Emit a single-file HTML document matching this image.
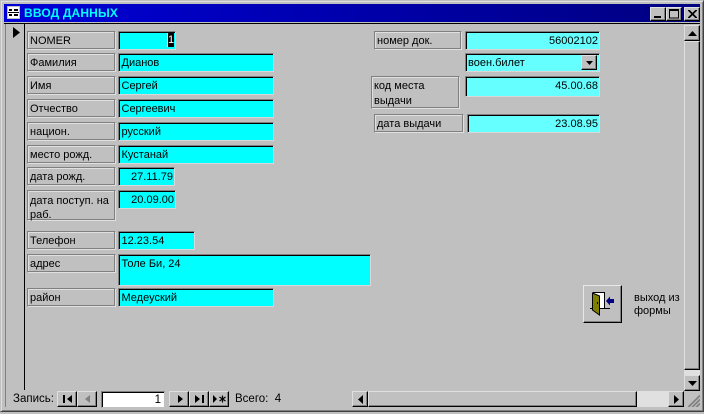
<!DOCTYPE html>
<html><head><meta charset="utf-8">
<style>
html,body{margin:0;padding:0;width:704px;height:414px;overflow:hidden;background:#c0c0c0}
body{position:relative;font-family:"Liberation Sans",sans-serif;font-size:11px;color:#000}
div{position:absolute;box-sizing:border-box}
svg{position:absolute;display:block}
.l{border:1px solid;border-color:#808080 #e0e0e0 #e0e0e0 #808080;box-shadow:inset -1px -1px 0 #808080,inset 1px 1px 0 #e0e0e0;padding:3px 0 0 2px;line-height:13px;background:#c0c0c0;white-space:normal}
.f{background:#0ff;border:1px solid;border-color:#808080 #d8d8d8 #d8d8d8 #808080;box-shadow:inset 1px 1px 0 #000;padding:2px 0 0 2.5px;line-height:14px;white-space:nowrap;font-size:11px}
.g{background:#66ffff}
.r{text-align:right;padding:2px 1px 0 0}
.b{background:#c0c0c0;border:1px solid;border-color:#dfdfdf #000 #000 #dfdfdf;box-shadow:inset -1px -1px 0 #808080}
</style></head><body>
<div style="left:0;top:0;width:704px;height:412px;border:1px solid;border-color:#c0c0c0 #404040 #404040 #c0c0c0;box-shadow:inset 1px 1px 0 #dfdfdf,inset -1px -1px 0 #808080"></div>

<!-- title bar -->
<div style="left:4px;top:4px;width:696px;height:18px;background:linear-gradient(90deg,#0000d8,#000080)"></div>
<svg style="left:7px;top:6px" width="13" height="13" viewBox="0 0 13 13"><rect x="0" y="0" width="13" height="13" fill="#fff"/><rect x="0.5" y="0.5" width="12" height="12" fill="none" stroke="#c0c0c0"/><path d="M2 3h3v2H2zM7 3h4v2H7zM2 8h3v2H2zM7 8h4v2H7z" fill="#000"/><path d="M1 6.5h11" stroke="#000"/></svg>
<div style="left:24px;top:5px;height:16px;line-height:16px;color:#0ff;font-weight:bold;font-size:12px;letter-spacing:.15px;white-space:nowrap">ВВОД ДАННЫХ</div>
<div class="b" style="left:650px;top:7px;width:16px;height:14px"><svg style="left:3px;top:8px" width="8" height="2"><rect width="7" height="2" fill="#000"/></svg></div>
<div class="b" style="left:666px;top:7px;width:16px;height:14px"><svg style="left:2px;top:1px" width="10" height="10"><rect x=".5" y="1" width="9" height="8" fill="none" stroke="#000"/><rect y="0" width="10" height="2" fill="#000"/></svg></div>
<div class="b" style="left:684px;top:7px;width:16px;height:14px"><svg style="left:3px;top:2px" width="9" height="8"><path d="M0 0L8 8M1 0L9 8M8 0L0 8M9 0L1 8" stroke="#000" stroke-width="1"/></svg></div>

<!-- form frame -->
<div style="left:4px;top:23px;width:696px;height:1px;background:#000"></div>
<div style="left:5px;top:24px;width:1px;height:366px;background:#808080"></div>
<div style="left:24px;top:24px;width:1px;height:366px;background:#000"></div>
<svg style="left:13px;top:27px" width="8" height="12"><path d="M0 0L7 5.5L0 11z" fill="#000"/></svg>

<!-- left column -->
<div class="l" style="left:27px;top:31px;width:89px;height:19px">NOMER</div>
<div class="f" style="left:118px;top:31px;width:58px;height:19px"></div>
<div style="left:167px;top:33px;width:7px;height:14px;background:#000;border-left:1px solid #fff;color:#fff;font-size:11px;line-height:14px;text-align:center">1</div>

<div class="l" style="left:27px;top:53px;width:89px;height:19px">Фамилия</div>
<div class="f" style="left:118px;top:53px;width:156px;height:19px">Дианов</div>
<div class="l" style="left:27px;top:76px;width:89px;height:19px">Имя</div>
<div class="f" style="left:118px;top:76px;width:156px;height:19px">Сергей</div>
<div class="l" style="left:27px;top:99px;width:89px;height:19px">Отчество</div>
<div class="f" style="left:118px;top:99px;width:156px;height:19px">Сергеевич</div>
<div class="l" style="left:27px;top:122px;width:89px;height:19px">национ.</div>
<div class="f" style="left:118px;top:122px;width:156px;height:19px">русский</div>
<div class="l" style="left:27px;top:145px;width:89px;height:19px">место рожд.</div>
<div class="f" style="left:118px;top:145px;width:156px;height:19px">Кустанай</div>
<div class="l" style="left:27px;top:167px;width:89px;height:19px">дата рожд.</div>
<div class="f r" style="left:118px;top:167px;width:57px;height:19px">27.11.79</div>
<div class="l" style="left:27px;top:190px;width:89px;height:31px;line-height:14px;padding-right:0">дата поступ. на раб.</div>
<div class="f r" style="left:118px;top:190px;width:58px;height:19px">20.09.00</div>
<div class="l" style="left:27px;top:231px;width:89px;height:19px">Телефон</div>
<div class="f" style="left:118px;top:231px;width:77px;height:19px">12.23.54</div>
<div class="l" style="left:27px;top:254px;width:89px;height:19px">адрес</div>
<div class="f" style="left:118px;top:254px;width:253px;height:32px">Толе Би, 24</div>
<div class="l" style="left:27px;top:288px;width:89px;height:19px">район</div>
<div class="f" style="left:118px;top:288px;width:156px;height:19px">Медеуский</div>

<!-- right column -->
<div class="l" style="left:374px;top:31px;width:88px;height:19px">номер док.</div>
<div class="f g r" style="left:465px;top:31px;width:135px;height:19px">56002102</div>
<div class="f g" style="left:465px;top:53px;width:135px;height:19px;padding-left:2px">воен.билет</div>
<div class="b" style="left:581px;top:55px;width:16px;height:15px"><svg style="left:4px;top:5px" width="7" height="4"><path d="M0 0h7L3.5 4z" fill="#000"/></svg></div>
<div class="l" style="left:371px;top:76px;width:89px;height:33px;padding-top:2px;line-height:15px">код места выдачи</div>
<div class="f g r" style="left:465px;top:76px;width:135px;height:21px">45.00.68</div>
<div class="l" style="left:374px;top:114px;width:90px;height:19px">дата выдачи</div>
<div class="f g r" style="left:467px;top:114px;width:133px;height:19px">23.08.95</div>

<!-- exit button -->
<div class="b" style="left:583px;top:285px;width:39px;height:38px;border-color:#e8e8e8 #000 #000 #e8e8e8">
<svg style="left:0;top:0" width="37" height="36" viewBox="0 0 37 36"><path d="M9.5 6.5H20.5V22.5H9.5z" fill="#fff" stroke="#000"/><path d="M8.5 7L15.5 10V29L8.5 24z" fill="#808000" stroke="#000"/><path d="M6 22.5H9M15 22.5H26" stroke="#000" fill="none"/><rect x="13" y="16" width="1" height="2" fill="#000"/><path d="M26 13H30V17H26V19.5L22 15L26 10.5z" fill="#000080"/></svg></div>
<div style="left:634px;top:292px;width:56px;line-height:13px;font-size:11px">выход из формы</div>

<!-- vertical scrollbar -->
<div class="b" style="left:684px;top:25px;width:16px;height:16px"><svg style="left:3px;top:5px" width="9" height="5"><path d="M4.5 0L9 5H0z" fill="#000"/></svg></div>
<div class="b" style="left:684px;top:41px;width:16px;height:329px"></div>
<div style="left:684px;top:370px;width:16px;height:5px;background:#e0e0e0"></div>
<div class="b" style="left:684px;top:375px;width:16px;height:16px"><svg style="left:3px;top:5px" width="9" height="5"><path d="M0 0H9L4.5 5z" fill="#000"/></svg></div>

<!-- nav bar -->
<div style="left:5px;top:390px;width:1px;height:17px;background:#808080"></div>
<div style="left:13px;top:392px;height:15px;line-height:15px;font-size:11.5px">Запись:</div>
<div class="b" style="left:57px;top:391px;width:20px;height:16px"><svg style="left:4px;top:2px" width="11" height="10"><rect x="1" y="1" width="2" height="8" fill="#000"/><path d="M10 1V9L5 5z" fill="#000"/></svg></div>
<div class="b" style="left:77px;top:391px;width:20px;height:16px"><svg style="left:6px;top:2px" width="8" height="10"><path d="M6 1V9L1 5z" fill="#808080"/></svg></div>
<div style="left:101px;top:391px;width:64px;height:17px;background:#fff;border:1px solid;border-color:#808080 #c0c0c0 #c0c0c0 #808080;box-shadow:inset 1px 1px 0 #000;text-align:right;padding:1px 3px 0 0;line-height:14px;font-size:11.5px">1</div>
<div class="b" style="left:169px;top:391px;width:20px;height:16px"><svg style="left:6px;top:2px" width="8" height="10"><path d="M2 1V9L7 5z" fill="#000"/></svg></div>
<div class="b" style="left:189px;top:391px;width:20px;height:16px"><svg style="left:4px;top:2px" width="11" height="10"><path d="M1 1V9L6 5z" fill="#000"/><rect x="8" y="1" width="2" height="8" fill="#000"/></svg></div>
<div class="b" style="left:209px;top:391px;width:20px;height:16px"><svg style="left:2px;top:2px" width="15" height="10"><path d="M1 1V9L5 5z" fill="#000"/><path d="M10.5 1.5V8.5M7.5 3L13.5 7M13.5 3L7.5 7" stroke="#000" stroke-width="1.2"/></svg></div>
<div style="left:235px;top:392px;height:15px;line-height:15px;font-size:11.5px;white-space:pre">Всего:  4</div>

<!-- horizontal scrollbar -->
<div class="b" style="left:352px;top:391px;width:16px;height:16px"><svg style="left:5px;top:3px" width="5" height="9"><path d="M5 0V9L0 4.5z" fill="#000"/></svg></div>
<div class="b" style="left:368px;top:391px;width:269px;height:16px"></div>
<div style="left:637px;top:391px;width:31px;height:16px;background:#e0e0e0"></div>
<div class="b" style="left:668px;top:391px;width:16px;height:16px"><svg style="left:5px;top:3px" width="5" height="9"><path d="M0 0V9L5 4.5z" fill="#000"/></svg></div>
<svg style="left:688px;top:394px" width="12" height="13"><path d="M12 1L0 13M12 2L1 13M12 5L4 13M12 6L5 13M12 9L8 13M12 10L9 13" stroke="#808080" stroke-width="1"/></svg>
</body></html>
